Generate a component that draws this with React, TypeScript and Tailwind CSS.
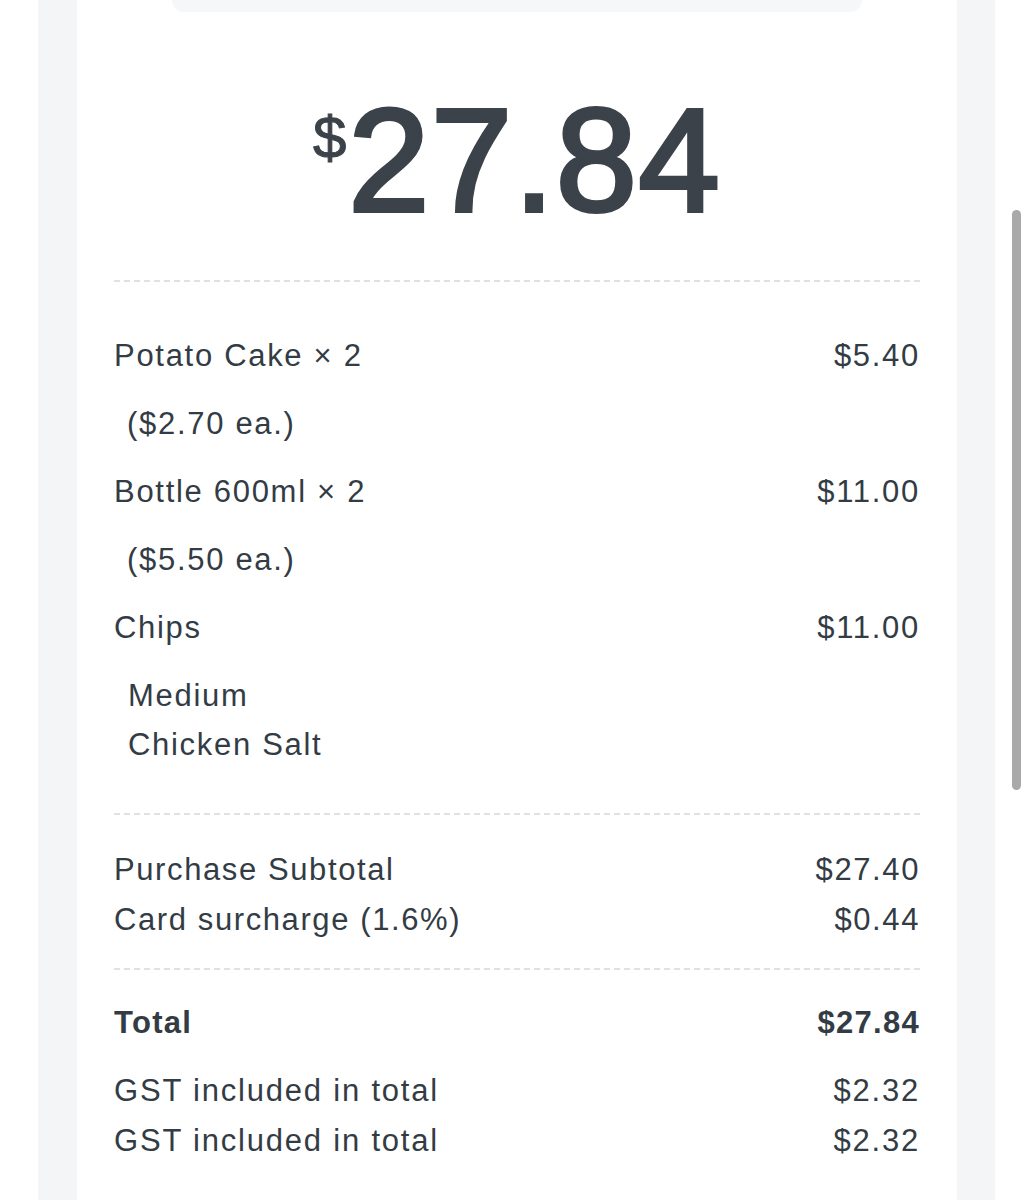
const ITEMS = [
  { name: 'Potato Cake × 2', price: '$5.40', notes: ['($2.70 ea.)'] },
  { name: 'Bottle 600ml × 2', price: '$11.00', notes: ['($5.50 ea.)'] },
  { name: 'Chips', price: '$11.00', notes: [], mods: ['Medium', 'Chicken Salt'] },
]

function Dashed() {
  return <div className="h-0 border-t-2 border-dashed border-[#dfe2e5]" />
}

function Row({ label, value, bold }: { label: string; value: string; bold?: boolean }) {
  return (
    <div className={`flex justify-between leading-[35px] ${bold ? 'font-bold' : ''}`}>
      <span>{label}</span>
      <span>{value}</span>
    </div>
  )
}

export default function App() {
  return (
    <div className="flex h-[1200px] overflow-hidden bg-white font-['Liberation_Sans',Arial,sans-serif] text-[#333c45]">
      <div className="w-[38px] shrink-0 bg-white" />
      <div className="w-[39px] shrink-0 bg-[#f4f5f7]" />
      <div className="w-[880px] shrink-0 bg-white px-[37px]">
        <div className="mx-[58px] h-[12px] rounded-b-xl bg-[#f6f7f8]" />

        <div className="mt-[76px] flex justify-center text-[#3b4249]">
          <span className="mt-[20px] mr-[2px] text-[60px] leading-none [-webkit-text-stroke:1px_#3b4249]">$</span>
          <span className="text-[146px] leading-none tracking-[1.5px] [-webkit-text-stroke:4px_#3b4249]">
            27.84
          </span>
        </div>

        <div className="mt-[46px]">
          <Dashed />
        </div>

        <div className="mt-[56px] text-[31px] tracking-[1.7px]">
          {ITEMS.map((item, i) => (
            <div key={i} className={i > 0 ? 'mt-[33px]' : ''}>
              <Row label={item.name} value={item.price} />
              {item.notes.map((n) => (
                <div key={n} className="mt-[33px] pl-[13px] leading-[35px]">
                  {n}
                </div>
              ))}
              {item.mods && (
                <div className="mt-[26px] pl-[14px]">
                  {item.mods.map((m) => (
                    <div key={m} className="leading-[49px]">
                      {m}
                    </div>
                  ))}
                </div>
              )}
            </div>
          ))}
        </div>

        <div className="mt-[44px]">
          <Dashed />
        </div>

        <div className="mt-[37px] flex flex-col gap-[15px] text-[31px] tracking-[1.6px]">
          <Row label="Purchase Subtotal" value="$27.40" />
          <Row label="Card surcharge (1.6%)" value="$0.44" />
        </div>

        <div className="mt-[31px]">
          <Dashed />
        </div>

        <div className="mt-[35px] text-[31px] tracking-[1.3px]">
          <Row label="Total" value="$27.84" bold />
        </div>

        <div className="mt-[33px] flex flex-col gap-[15px] text-[31px] tracking-[1.8px]">
          <Row label="GST included in total" value="$2.32" />
          <Row label="GST included in total" value="$2.32" />
        </div>
      </div>
      <div className="w-[38px] shrink-0 bg-[#f4f5f7]" />
      <div className="w-[38px] shrink-0 bg-white">
        <div className="ml-[17px] mt-[210px] h-[580px] w-[9px] rounded-full bg-[#a9a9a9]" />
      </div>
    </div>
  )
}
